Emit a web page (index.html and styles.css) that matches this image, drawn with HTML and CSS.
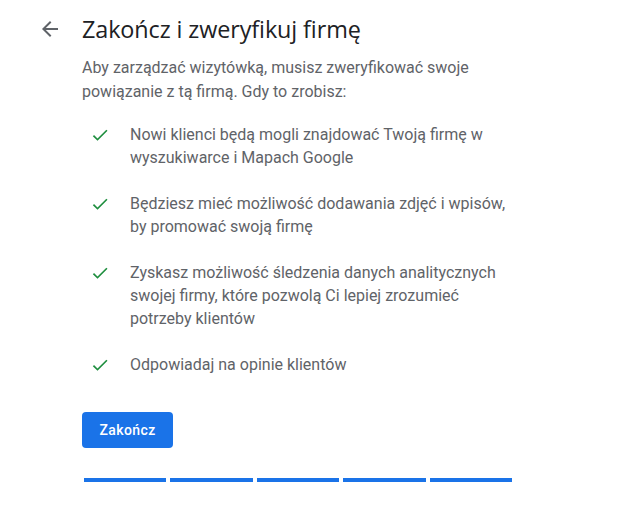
FILE: index.html
```html
<!DOCTYPE html>
<html lang="pl">
<head>
<meta charset="utf-8">
<link rel="stylesheet" href="styles.css">
</head>
<body>
<div class="page">
  <header class="head">
    <svg class="back" viewBox="0 0 24 24" width="24" height="24"><path d="M20 11H7.83l5.59-5.59L12 4l-8 8 8 8 1.41-1.41L7.83 13H20v-2z" fill="#5f6368"/></svg>
    <h1 class="title">Zakończ i zweryfikuj firmę</h1>
  </header>
  <div class="content">
    <p class="intro">Aby zarządzać wizytówką, musisz zweryfikować swoje powiązanie z tą firmą. Gdy to zrobisz:</p>
    <ul class="list">
      <li class="item"><svg class="check" viewBox="0 0 24 24" width="20" height="20"><path d="M9 16.17L4.83 12l-1.42 1.41L9 19 21 7l-1.41-1.41z" fill="#1e8e3e"/></svg><span>Nowi klienci będą mogli znajdować Twoją firmę w wyszukiwarce i Mapach Google</span></li>
      <li class="item"><svg class="check" viewBox="0 0 24 24" width="20" height="20"><path d="M9 16.17L4.83 12l-1.42 1.41L9 19 21 7l-1.41-1.41z" fill="#1e8e3e"/></svg><span>Będziesz mieć możliwość dodawania zdjęć i wpisów, by promować swoją firmę</span></li>
      <li class="item"><svg class="check" viewBox="0 0 24 24" width="20" height="20"><path d="M9 16.17L4.83 12l-1.42 1.41L9 19 21 7l-1.41-1.41z" fill="#1e8e3e"/></svg><span>Zyskasz możliwość śledzenia danych analitycznych swojej firmy, które pozwolą Ci lepiej zrozumieć potrzeby klientów</span></li>
      <li class="item"><svg class="check" viewBox="0 0 24 24" width="20" height="20"><path d="M9 16.17L4.83 12l-1.42 1.41L9 19 21 7l-1.41-1.41z" fill="#1e8e3e"/></svg><span>Odpowiadaj na opinie klientów</span></li>
    </ul>
    <button class="btn">Zakończ</button>
    <div class="progress">
      <div class="seg"></div><div class="seg"></div><div class="seg"></div><div class="seg"></div><div class="seg"></div>
    </div>
  </div>
</div>
</body>
</html>
```
FILE: styles.css
```css
html, body { margin: 0; padding: 0; background: #fff; }
body { font-family: Roboto, "Noto Sans", Arial, sans-serif; color: #5f6368; }
.page { width: 621px; height: 515px; overflow: hidden; }
.head { display: flex; align-items: center; padding: 13px 0 0 38px; height: 32px; }
.back { display: block; margin-right: 20px; }
.title { margin: 0; font-family: "Open Sans", Roboto, sans-serif; font-weight: 400; font-size: 23.4px; line-height: 32px; color: #202124; letter-spacing: -0.1px; }
.content { padding-left: 82px; padding-top: 11px; }
.intro { margin: 0; width: 400px; font-size: 16px; line-height: 24px; }
.list { list-style: none; margin: 19px 0 0 0; padding: 0; width: 430px; }
.item { display: flex; align-items: flex-start; font-size: 16px; line-height: 23px; margin-bottom: 23px; }
.item:last-child { margin-bottom: 0; }
.check { flex: none; margin: 2px 20px 0 8px; }
.btn { display: block; margin-top: 36px; width: 91px; height: 36px; border: 0; border-radius: 4px; background: #1a73e8; color: #fff; font-family: Roboto, sans-serif; font-weight: 500; font-size: 14px; letter-spacing: 0.4px; padding: 0; }
.progress { display: flex; gap: 4px; margin: 30px 0 0 2px; width: 428px; }
.seg { flex: 1; height: 4px; background: #1a73e8; }
```
